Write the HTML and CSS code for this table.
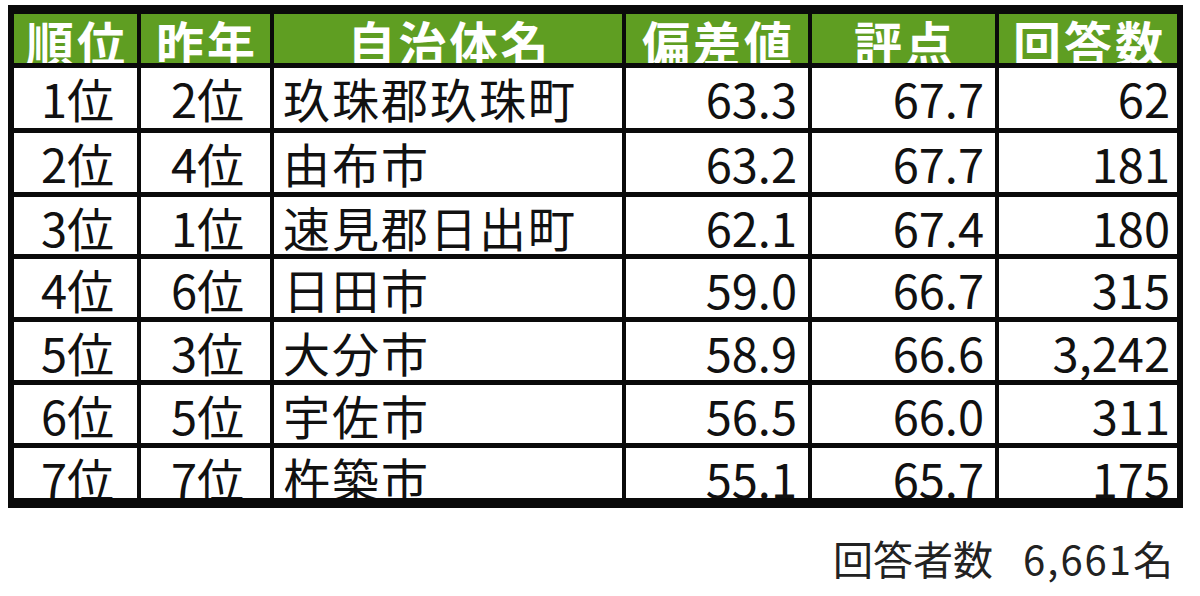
FILE: index.html
```html
<!DOCTYPE html>
<html lang="ja">
<head>
<meta charset="utf-8">
<title>ランキング</title>
<link rel="stylesheet" href="styles.css">
</head>
<body>
<div class="page">
  <div class="table">
    <div class="cell head">順位</div>
    <div class="cell head">昨年</div>
    <div class="cell head">自治体名</div>
    <div class="cell head">偏差値</div>
    <div class="cell head">評点</div>
    <div class="cell head">回答数</div>

    <div class="cell rank">1位</div><div class="cell rank">2位</div><div class="cell name">玖珠郡玖珠町</div><div class="cell num">63.3</div><div class="cell num">67.7</div><div class="cell num last">62</div>
    <div class="cell rank">2位</div><div class="cell rank">4位</div><div class="cell name">由布市</div><div class="cell num">63.2</div><div class="cell num">67.7</div><div class="cell num last">181</div>
    <div class="cell rank">3位</div><div class="cell rank">1位</div><div class="cell name">速見郡日出町</div><div class="cell num">62.1</div><div class="cell num">67.4</div><div class="cell num last">180</div>
    <div class="cell rank">4位</div><div class="cell rank">6位</div><div class="cell name">日田市</div><div class="cell num">59.0</div><div class="cell num">66.7</div><div class="cell num last">315</div>
    <div class="cell rank">5位</div><div class="cell rank">3位</div><div class="cell name">大分市</div><div class="cell num">58.9</div><div class="cell num">66.6</div><div class="cell num last">3,242</div>
    <div class="cell rank">6位</div><div class="cell rank">5位</div><div class="cell name">宇佐市</div><div class="cell num">56.5</div><div class="cell num">66.0</div><div class="cell num last">311</div>
    <div class="cell rank">7位</div><div class="cell rank">7位</div><div class="cell name">杵築市</div><div class="cell num">55.1</div><div class="cell num">65.7</div><div class="cell num last">175</div>
  </div>
  <div class="footer"><span class="f-label">回答者数</span><span class="f-value">6,661名</span></div>
</div>
</body>
</html>
```
FILE: styles.css
```css
html, body {
  margin: 0;
  padding: 0;
  background: #ffffff;
}
body {
  font-family: "Noto Sans CJK JP", "Noto Sans", sans-serif;
  color: #111111;
}
.page {
  width: 1200px;
  height: 596px;
  overflow: hidden;
  padding-top: 5px;
  box-sizing: border-box;
}
.table {
  margin-left: 8px;
  width: 1175px;
  box-sizing: border-box;
  background: #0a0a0a;
  padding: 9px 6px 10px 6px;
  display: grid;
  grid-template-columns: 123px 129px 348px 182px 183px 178px;
  grid-template-rows: 49px 60px 59px 57px 58px 58px 58px 50px;
  column-gap: 4px;
  row-gap: 5px;
}
.cell {
  background: #ffffff;
  overflow: hidden;
  display: flex;
  align-items: flex-start;
  font-size: 47px;
  line-height: 40px;
  padding-top: 10px;
  box-sizing: border-box;
  white-space: nowrap;
}
.head {
  background: #5f9e22;
  color: #ffffff;
  font-weight: 700;
  justify-content: center;
  padding-top: 7px;
  padding-left: 3px;
  letter-spacing: 3px;
  font-size: 48px;
}
.rank {
  justify-content: center;
  padding-left: 4px;
}
.name {
  justify-content: flex-start;
  padding-left: 9px;
  letter-spacing: 2px;
}
.num {
  justify-content: flex-end;
  padding-right: 11px;
}
.num.last {
  padding-right: 7px;
}
.footer {
  display: flex;
  justify-content: flex-end;
  align-items: flex-start;
  gap: 30px;
  margin-top: 30px;
  padding-right: 25px;
  font-size: 40px;
  line-height: 40px;
  color: #222222;
}
.f-value {
  letter-spacing: 2px;
}
```
